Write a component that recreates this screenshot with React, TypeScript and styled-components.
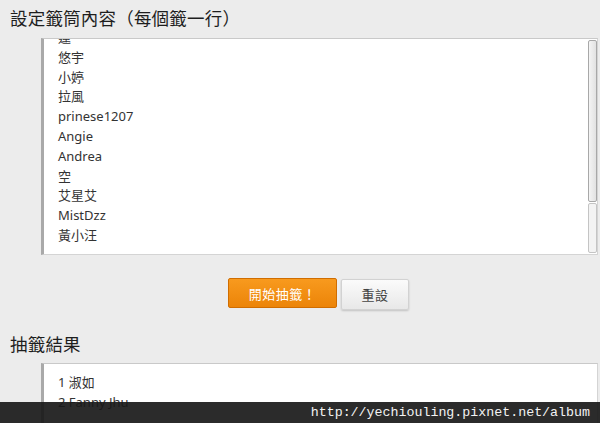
import React from "react";
import styled, { createGlobalStyle } from "styled-components";

const Global = createGlobalStyle`
  html, body { margin: 0; padding: 0; background: #ececec; }
  #root { width: 600px; height: 423px; overflow: hidden; position: relative; }
`;

const Page = styled.div`
  width: 600px;
  height: 423px;
  position: relative;
  overflow: hidden;
  background: #ececec;
  font-family: "Noto Sans", "Noto Sans CJK TC", sans-serif;
  color: #222;
`;

const Heading = styled.h2<{ $top: number }>`
  margin: ${(p) => p.$top}px 0 0 10px;
  font-size: 17.5px;
  line-height: 24px;
  font-weight: 400;
  letter-spacing: 0.2px;
  font-family: "Noto Sans CJK TC", sans-serif;
  color: #1e1e1e;
`;

const Column = styled.div`
  margin: 0 2px 0 41px;
  display: flex;
  flex-direction: column;
`;

const Box = styled.div<{ $height: number; $top: number }>`
  margin-top: ${(p) => p.$top}px;
  height: ${(p) => p.$height}px;
  background: #fff;
  border-top: 1px solid #c9c9c9;
  border-right: 1px solid #d4d4d4;
  border-bottom: 1px solid #d4d4d4;
  border-left: 3px solid #a9a9a9;
  display: flex;
  overflow: hidden;
`;

const Lines = styled.div<{ $offset: number; $pad: number }>`
  flex: 1;
  padding: ${(p) => p.$pad}px 0 0 14px;
  margin-top: ${(p) => p.$offset}px;
  font-size: 13px;
  line-height: 19.8px;
  color: #333;
`;

const Line = styled.div`
  white-space: nowrap;
`;

const Scrollbar = styled.div`
  width: 9px;
  margin: 1px 0 1px;
  display: flex;
  flex-direction: column;
  gap: 1px;
`;

const Thumb = styled.div`
  flex: 0 0 160px;
  border: 1px solid #a8a8a8;
  border-radius: 2px;
  background: linear-gradient(90deg, #f4f4f4, #e2e2e2);
`;

const Track = styled.div`
  flex: 1;
  border: 1px solid #c4c4c4;
  border-radius: 2px;
  background: #f3f3f3;
`;

const ButtonRow = styled.div`
  display: flex;
  justify-content: center;
  align-items: flex-start;
  gap: 4px;
  margin-top: 23px;
  padding-right: 2px;
`;

const Button = styled.button<{ $primary?: boolean }>`
  font-family: "Noto Sans CJK TC", sans-serif;
  font-size: 13px;
  letter-spacing: 0.5px;
  border-radius: 2px;
  cursor: pointer;
  padding: 0;
  width: ${(p) => (p.$primary ? 109 : 68)}px;
  height: ${(p) => (p.$primary ? 30 : 31)}px;
  margin-top: ${(p) => (p.$primary ? 0 : 1)}px;
  color: ${(p) => (p.$primary ? "#fff" : "#444")};
  border: 1px solid ${(p) => (p.$primary ? "#d06d00" : "#d2d2d2")};
  background: ${(p) =>
    p.$primary
      ? "linear-gradient(180deg, #f89a1e 0%, #ec8408 100%)"
      : "linear-gradient(180deg, #fbfbfb 0%, #e8e8e8 100%)"};
  box-shadow: ${(p) => (p.$primary ? "none" : "0 1px 2px rgba(0,0,0,0.18)")};
`;

const Watermark = styled.div`
  position: absolute;
  left: 0;
  right: 0;
  bottom: 0;
  height: 21px;
  background: rgba(25, 25, 25, 0.92);
  display: flex;
  align-items: center;
  justify-content: flex-end;
  padding-right: 10px;
  font-family: "Liberation Mono", monospace;
  font-size: 13.3px;
  color: #f2f2f2;
`;

const entries = [
  "蓮",
  "悠宇",
  "小婷",
  "拉風",
  "prinese1207",
  "Angie",
  "Andrea",
  "空",
  "艾星艾",
  "MistDzz",
  "黃小汪",
];

const results = ["1 淑如", "2 Fanny Jhu"];

export default function App() {
  return (
    <Page>
      <Global />
      <Heading $top={6}>設定籤筒內容（每個籤一行）</Heading>
      <Column>
        <Box $top={8} $height={215}>
          <Lines $offset={-11} $pad={0}>
            {entries.map((e) => (
              <Line key={e}>{e}</Line>
            ))}
          </Lines>
          <Scrollbar>
            <Thumb />
            <Track />
          </Scrollbar>
        </Box>
        <ButtonRow>
          <Button $primary>開始抽籤！</Button>
          <Button>重設</Button>
        </ButtonRow>
      </Column>
      <Heading $top={22}>抽籤結果</Heading>
      <Column>
        <Box $top={7} $height={80}>
          <Lines $offset={0} $pad={9}>
            {results.map((e) => (
              <Line key={e}>{e}</Line>
            ))}
          </Lines>
        </Box>
      </Column>
      <Watermark>http://yechiouling.pixnet.net/album</Watermark>
    </Page>
  );
}
